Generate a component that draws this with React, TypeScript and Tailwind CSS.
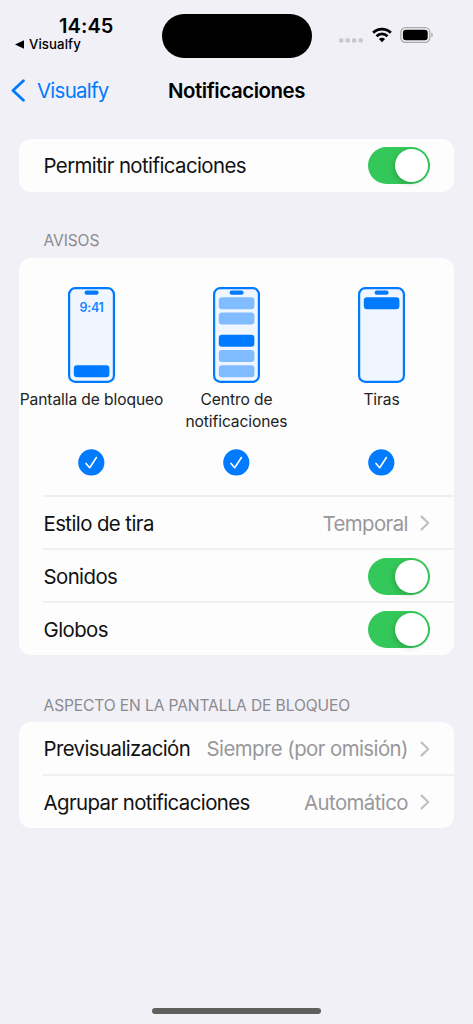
import type { ReactNode } from "react";

function Chevron() {
  return (
    <svg className="ml-3 h-4 w-[10px] shrink-0 text-[#c1c1c4]" viewBox="0 0 10 16" fill="none">
      <path d="M1.6 1.6 8.2 8 1.6 14.4" stroke="currentColor" strokeWidth="2.2" strokeLinecap="round" strokeLinejoin="round" />
    </svg>
  );
}

function Toggle() {
  return (
    <button role="switch" aria-checked="true" className="flex h-[37px] w-[62px] shrink-0 items-center justify-end rounded-full bg-[#34c759] pr-[2.5px]">
      <span className="size-[33px] rounded-full bg-white shadow-[-2px_2px_5px_rgba(0,0,0,0.15)]" />
    </button>
  );
}

function Row({ label, children, line = false }: { label: string; children: ReactNode; line?: boolean }) {
  return (
    <div className="pl-6">
      <div className={line ? "-mt-px flex h-[54px] items-center border-t-2 border-[#f0f0f1] pr-6" : "flex h-[53px] items-center pr-6"}>
        <span className="flex-1 pt-[2px] pl-[0.5px] text-[20.4px] tracking-[-0.58px] whitespace-nowrap text-[#111]">{label}</span>
        {children}
      </div>
    </div>
  );
}

function Value({ text }: { text: string }) {
  return (
    <>
      <span className="pt-[2px] text-[20.4px] tracking-[-0.56px] whitespace-nowrap text-[#98989b]">{text}</span>
      <Chevron />
    </>
  );
}

function Phone({ children }: { children?: ReactNode }) {
  return (
    <svg className="h-24 w-[47px]" viewBox="0 0 47 96">
      <rect x="1.1" y="1.1" width="44.8" height="93.8" rx="6.2" fill="#eff6ff" stroke="#007aff" strokeWidth="2.2" />
      <rect x="16.6" y="3.6" width="14" height="4.2" rx="2.1" fill="#007aff" />
      {children}
    </svg>
  );
}

function Bar({ y, light = false }: { y: number; light?: boolean }) {
  return <rect x="5.8" y={y} width="35.6" height="12" rx="3.2" fill={light ? "#80bcff" : "#007aff"} />;
}

function Option({ label, children }: { label: string; children: ReactNode }) {
  return (
    <div className="flex flex-col items-center">
      {children}
      <div className="mt-[6px] flex h-11 w-[145px] justify-center text-center text-[15.6px] leading-[21.6px] tracking-[-0.1px] text-[#222]">
        <span className="whitespace-pre">{label}</span>
      </div>
      <svg className="mt-[16px] size-[27px]" viewBox="0 0 27 27" fill="none">
        <circle cx="13.3" cy="13.4" r="13.1" fill="#007aff" />
        <path d="M8 14.4 11.7 18.7 18.4 8.5" stroke="white" strokeWidth="1.6" strokeLinecap="round" strokeLinejoin="round" />
      </svg>
    </div>
  );
}

function StatusBar() {
  return (
    <header className="flex h-[68px] items-start">
      <div className="w-[161.5px] pt-[15px] pl-[15px]">
        <div className="pl-[44px] text-[20px] leading-[23px] font-semibold tracking-[0.1px]">14:45</div>
        <div className="flex items-center text-[13.2px] leading-[13px] font-medium tracking-[0.1px]">
          <svg className="mr-[5px] h-[9px] w-[9px]" viewBox="0 0 9 9">
            <path d="M0 4.5 9 .3v8.4Z" fill="currentColor" />
          </svg>
          Visualfy
        </div>
      </div>
      <div className="mt-[13.5px] h-[44px] w-[150.5px] rounded-full bg-black" />
      <div className="flex pt-[27px] pl-[27px]">
        <svg className="h-4 w-6" viewBox="0 0 24 16" fill="#c7c7ca">
          <rect x="0" y="11.2" width="4.4" height="4.4" rx="1.5" />
          <rect x="6.5" y="11.2" width="4.4" height="4.4" rx="1.5" />
          <rect x="13" y="11.2" width="4.4" height="4.4" rx="1.5" />
          <rect x="19.5" y="11.2" width="4.4" height="4.4" rx="1.5" />
        </svg>
        <svg className="ml-[8.5px] h-4 w-5" viewBox="0 0 20 16" fill="none" stroke="black">
          <path d="M1.2 5.7a12.6 12.6 0 0 1 17.6 0" strokeWidth="2.9" />
          <path d="M4.5 9.2a7.8 7.8 0 0 1 11 0" strokeWidth="2.7" />
          <path d="M10 15.2 6.9 12a4.4 4.4 0 0 1 6.2 0Z" fill="black" stroke="none" />
        </svg>
        <svg className="ml-[8.5px] h-4 w-[34px]" viewBox="0 0 34 16">
          <rect x=".8" y=".7" width="29" height="14.6" rx="4.6" fill="none" stroke="#a9a9ac" strokeWidth="1.2" />
          <rect x="2.9" y="2.7" width="24.8" height="10.6" rx="3" fill="black" />
          <path d="M31.3 5.5c2 .9 2 4.1 0 5Z" fill="#a9a9ac" />
        </svg>
      </div>
    </header>
  );
}

export default function App() {
  return (
    <main className="flex h-[1024px] w-[473px] flex-col bg-[#f1f0f6] font-['Inter','Liberation_Sans',sans-serif] text-black">
      <StatusBar />

      <nav className="grid h-[46px] grid-cols-[1fr_auto_1fr] items-center">
        <a className="flex items-center pl-[11px] text-[20.4px] tracking-[-0.7px] text-[#007aff]">
          <svg className="mr-3 h-[23px] w-[14px]" viewBox="0 0 14 23" fill="none">
            <path d="M12.4 1.7 2 11.5l10.4 9.8" stroke="currentColor" strokeWidth="2.8" strokeLinecap="round" strokeLinejoin="round" />
          </svg>
          <span className="pt-px">Visualfy</span>
        </a>
        <h1 className="pt-px text-[20.4px] font-semibold tracking-[-0.42px]">Notificaciones</h1>
      </nav>

      <section className="mx-[19px] mt-[25px] rounded-xl bg-[#fdfdfd]">
        <Row label="Permitir notificaciones"><Toggle /></Row>
      </section>

      <h2 className="mt-[38px] ml-[43.5px] h-[28px] text-[15.6px] leading-[21px] tracking-[-0.13px] text-[#8b8b8f]">AVISOS</h2>
      <section className="mx-[19px] rounded-xl bg-[#fdfdfd]">
        <div className="grid h-[238px] grid-cols-3 pt-[29px]">
          <Option label="Pantalla de bloqueo">
            <Phone>
              <text x="23.5" y="25.3" textAnchor="middle" className="text-[12.5px] font-semibold tracking-[-0.3px]" fill="#1684ff">9:41</text>
              <Bar y={78.3} />
            </Phone>
          </Option>
          <Option label={"Centro de\nnotificaciones"}>
            <Phone>
              <Bar y={10.2} light />
              <Bar y={25.4} light />
              <Bar y={47.8} />
              <Bar y={63} light />
              <Bar y={78.3} light />
            </Phone>
          </Option>
          <Option label="Tiras">
            <Phone><Bar y={10.2} /></Phone>
          </Option>
        </div>
        <Row label="Estilo de tira" line><Value text="Temporal" /></Row>
        <Row label="Sonidos" line><Toggle /></Row>
        <Row label="Globos" line><Toggle /></Row>
      </section>

      <h2 className="mt-[39.5px] ml-[43.5px] h-[27.5px] text-[15.6px] leading-[21px] tracking-[-0.13px] text-[#8b8b8f]">
        ASPECTO EN LA PANTALLA DE BLOQUEO
      </h2>
      <section className="mx-[19px] rounded-xl bg-[#fdfdfd]">
        <Row label="Previsualización"><Value text="Siempre (por omisión)" /></Row>
        <Row label="Agrupar notificaciones" line><Value text="Automático" /></Row>
      </section>

      <div className="mx-auto mt-auto mb-[10px] h-[6px] w-[169px] rounded-full bg-[#5f5f60]" />
    </main>
  );
}
